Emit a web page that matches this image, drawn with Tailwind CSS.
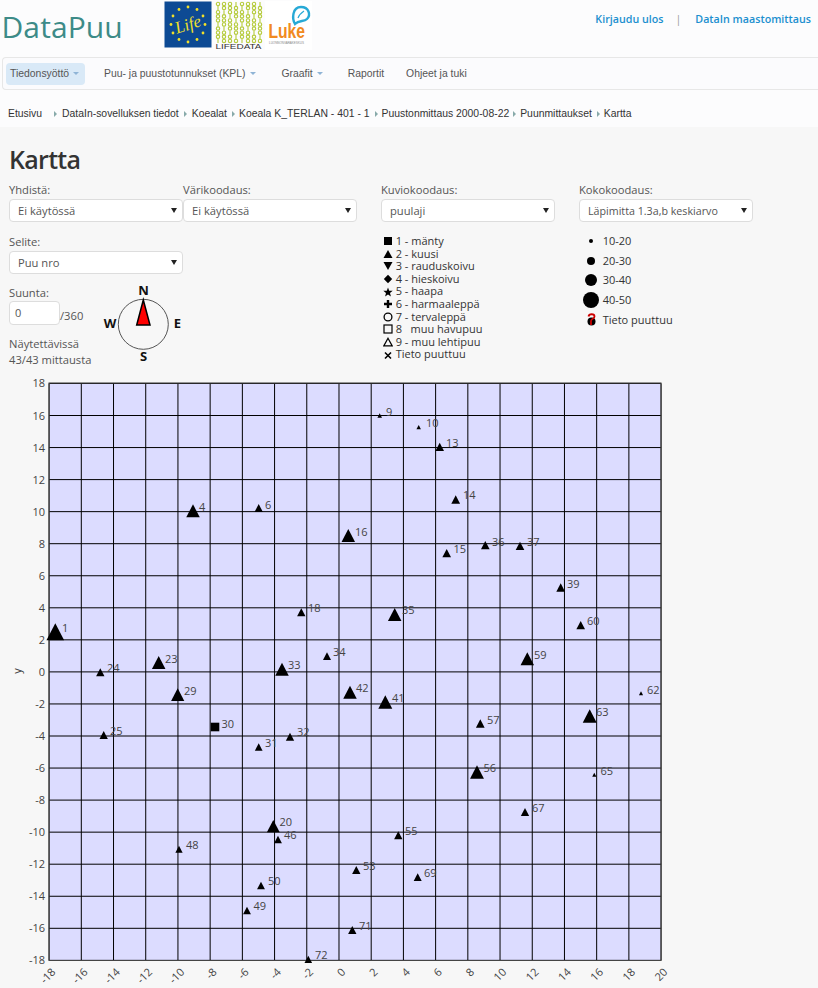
<!DOCTYPE html>
<html lang="fi">
<head>
  <meta charset="UTF-8" />
  <title>DataPuu - Kartta</title>
  <script src="https://cdn.jsdelivr.net/npm/@tailwindcss/browser@4"></script>
</head>
<body class="bg-[#f7f7f7] font-['Open_Sans',sans-serif] text-[#333] overflow-hidden">

<div class="w-[818px] h-[988px] overflow-hidden">
  <!-- Yläpalkki -->
  <div class="bg-[#fcfcfd]">
    <header class="h-[57px] flex items-start">
      <div class="w-[164px] pl-[1.5px] pt-[6px] text-[30px] leading-[42px] font-medium tracking-[0.1px] text-[#3d8b88]">DataPuu</div>
      <div class="flex items-start pt-[1px]">
        <svg width="48" height="47" viewBox="0 0 48 47" class="shrink-0">
          <rect x="0.5" y="0.5" width="47" height="46" fill="#0d4a94"/>
          <g fill="#f2e02a">
            <circle cx="24" cy="6" r="1.4"/><circle cx="33" cy="8.5" r="1.4"/><circle cx="39" cy="15" r="1.4"/><circle cx="41" cy="23.5" r="1.4"/><circle cx="39" cy="32" r="1.4"/><circle cx="33" cy="38.5" r="1.4"/><circle cx="24" cy="41" r="1.4"/><circle cx="15" cy="38.5" r="1.4"/><circle cx="9" cy="32" r="1.4"/><circle cx="7" cy="23.5" r="1.4"/><circle cx="9" cy="15" r="1.4"/><circle cx="15" cy="8.5" r="1.4"/>
          </g>
          <text x="24" y="29" text-anchor="middle" font-family="Liberation Serif" font-style="italic" font-size="17" fill="#f2e02a" transform="rotate(-18 24 24)">Life</text>
        </svg>
        <svg width="49" height="49" viewBox="0 0 49 49" class="ml-[3px] shrink-0">
          <g id="bars" fill="none" stroke="#b5cb3a" stroke-width="1.1"></g>
          <text x="0.5" y="48" font-family="Liberation Sans" font-size="7.5" textLength="46" lengthAdjust="spacingAndGlyphs" fill="#333">LIFEDATA</text>
        </svg>
        <svg width="47" height="49" viewBox="0 0 47 49" class="ml-[1px] shrink-0 overflow-visible">
          <rect width="47" height="49" fill="#fff"/>
          <path d="M30 23 C27 18 27 6 36 6 C44 6 46 14 42 18 C39 21 34 19 30 23 Z" fill="none" stroke="#27a9d6" stroke-width="2.4"/>
          <path d="M33 17 C34 14 36 12 39 10" stroke="#27a9d6" stroke-width="1.2" fill="none"/>
          <text x="3.5" y="37" font-family="Liberation Sans" font-weight="700" font-size="20" textLength="36.5" lengthAdjust="spacingAndGlyphs" fill="#f18a21">Luke</text>
          <text x="4" y="43" font-family="Liberation Sans" font-size="3" textLength="35" lengthAdjust="spacingAndGlyphs" fill="#888">LUONNONVARAKESKUS</text>
        </svg>
      </div>
      <div class="ml-auto pt-[12px] pr-[7px] flex text-[10.7px] leading-[15px] font-semibold text-[#1b8fcf]">
        <a href="#">Kirjaudu ulos</a>
        <span class="ml-[12px] mr-[14px] font-normal text-[#999]">|</span>
        <a href="#">DataIn maastomittaus</a>
      </div>
    </header>

    <!-- Navigaatio -->
    <nav class="h-[33px] ml-[2px] border border-r-0 border-[#e7e7e7] rounded-l-[4px] flex items-center font-['Liberation_Sans',sans-serif] text-[10.4px] text-[#555] bg-[#fbfbfd]">
      <a href="#" class="ml-[3px] w-[79px] h-[22px] rounded-[4px] bg-[#d9e9f7] flex items-center pl-[4px] gap-[4px]">Tiedonsyöttö <i class="w-0 h-0 border-x-[3px] border-x-transparent border-t-[3px] border-t-[#8fb4d6]"></i></a>
      <a href="#" class="ml-[19px] flex items-center gap-[4px]">Puu- ja puustotunnukset (KPL) <i class="w-0 h-0 border-x-[3px] border-x-transparent border-t-[3px] border-t-[#8fb4d6]"></i></a>
      <a href="#" class="ml-[26px] flex items-center gap-[4px]">Graafit <i class="w-0 h-0 border-x-[3px] border-x-transparent border-t-[3px] border-t-[#8fb4d6]"></i></a>
      <a href="#" class="ml-[25px]">Raportit</a>
      <a href="#" class="ml-[22px]">Ohjeet ja tuki</a>
    </nav>

    <!-- Murupolku -->
    <div class="h-[37px] pt-[10px] pl-[8px] flex items-center font-['Liberation_Sans',sans-serif] text-[10.4px] text-[#333]">
      <span class="mr-[12px]">Etusivu</span>
      <i class="w-0 h-0 border-y-[3px] border-y-transparent border-l-[3px] border-l-[#8aa]"></i><span class="ml-[5px] mr-[5px]">DataIn-sovelluksen tiedot</span>
      <i class="w-0 h-0 border-y-[3px] border-y-transparent border-l-[3px] border-l-[#8aa]"></i><span class="ml-[5px] mr-[5px]">Koealat</span>
      <i class="w-0 h-0 border-y-[3px] border-y-transparent border-l-[3px] border-l-[#8aa]"></i><span class="ml-[4px] mr-[5px]">Koeala K_TERLAN - 401 - 1</span>
      <i class="w-0 h-0 border-y-[3px] border-y-transparent border-l-[3px] border-l-[#8aa]"></i><span class="ml-[4px] mr-[4px]">Puustonmittaus 2000-08-22</span>
      <i class="w-0 h-0 border-y-[3px] border-y-transparent border-l-[3px] border-l-[#8aa]"></i><span class="ml-[4px] mr-[5px]">Puunmittaukset</span>
      <i class="w-0 h-0 border-y-[3px] border-y-transparent border-l-[3px] border-l-[#8aa]"></i><span class="ml-[4px]">Kartta</span>
    </div>
  </div>

  <!-- Sisältö -->
  <main class="pl-[9px]">
    <h1 class="text-[25px] leading-[36px] font-semibold tracking-[-0.7px] text-[#333] pt-[14px]">Kartta</h1>

    <div class="flex text-[11.2px] leading-[16px] text-[#555] mt-[5px]">
      <!-- Vasen: valinnat ja kompassi -->
      <div class="w-[372px] shrink-0">
        <div class="flex">
          <div class="w-[174px]">
            <label class="block">Yhdistä:</label>
            <div class="mt-[1px] w-[174px] h-[23px] border border-[#ddd] rounded-[4px] bg-white flex items-center justify-between pl-[8px] pr-[5px]"><span>Ei käytössä</span><i class="w-0 h-0 border-x-[3px] border-x-transparent border-t-[5px] border-t-[#222]"></i></div>
          </div>
          <div class="w-[174px]">
            <label class="block">Värikoodaus:</label>
            <div class="mt-[1px] w-[174px] h-[23px] border border-[#ddd] rounded-[4px] bg-white flex items-center justify-between pl-[8px] pr-[5px]"><span>Ei käytössä</span><i class="w-0 h-0 border-x-[3px] border-x-transparent border-t-[5px] border-t-[#222]"></i></div>
          </div>
        </div>
        <label class="block mt-[12px]">Selite:</label>
        <div class="mt-[1px] w-[174px] h-[23px] border border-[#ddd] rounded-[4px] bg-white flex items-center justify-between pl-[8px] pr-[5px]"><span>Puu nro</span><i class="w-0 h-0 border-x-[3px] border-x-transparent border-t-[5px] border-t-[#222]"></i></div>

        <div class="flex mt-[11px]">
          <div class="w-[100px]">
            <label class="block">Suunta:</label>
            <div class="flex items-center">
              <div class="w-[51px] h-[24px] border border-[#ddd] rounded-[4px] bg-white pl-[5px] flex items-center text-[11px]">0</div>
              <span class="mt-[6px]">/360</span>
            </div>
            <p class="mt-[11px]">Näytettävissä</p>
            <p>43/43 mittausta</p>
          </div>
          <svg width="66" height="82" viewBox="0 0 66 82" class="-mt-[3px] overflow-visible" font-family="Open Sans" font-size="13" font-weight="700" fill="#111">
            <circle cx="34.3" cy="42.3" r="25" fill="none" stroke="#555" stroke-width="1"/>
            <path d="M34.3 18 L27.7 43 L41 43 Z" fill="#f00" stroke="#000" stroke-width="1.5"/>
            <text x="34.5" y="12.5" text-anchor="middle">N</text>
            <text x="34.5" y="78.5" text-anchor="middle">S</text>
            <text x="1" y="46" text-anchor="middle">W</text>
            <text x="68.5" y="46" text-anchor="middle">E</text>
          </svg>
        </div>
      </div>

      <!-- Kuviokoodaus -->
      <div class="w-[198px] shrink-0">
        <label class="block">Kuviokoodaus:</label>
        <div class="mt-[1px] w-[174px] h-[23px] border border-[#ddd] rounded-[4px] bg-white flex items-center justify-between pl-[8px] pr-[5px]"><span>puulaji</span><i class="w-0 h-0 border-x-[3px] border-x-transparent border-t-[5px] border-t-[#222]"></i></div>
        <ul class="mt-[13px] text-[#333] leading-[12.6px] text-[11px]">
          <li class="flex items-center h-[12.6px]"><svg class="w-[10px] h-[10px] ml-[1.5px] mr-[3.2px]" viewBox="0 0 10 10"><rect x="1" y="1" width="8" height="8"/></svg>1 - mänty</li>
          <li class="flex items-center h-[12.6px]"><svg class="w-[10px] h-[10px] ml-[1.5px] mr-[3.2px]" viewBox="0 0 10 10"><path d="M5 1 L9.5 9 L.5 9 Z"/></svg>2 - kuusi</li>
          <li class="flex items-center h-[12.6px]"><svg class="w-[10px] h-[10px] ml-[1.5px] mr-[3.2px]" viewBox="0 0 10 10"><path d="M5 9 L9.5 1 L.5 1 Z"/></svg>3 - rauduskoivu</li>
          <li class="flex items-center h-[12.6px]"><svg class="w-[10px] h-[10px] ml-[1.5px] mr-[3.2px]" viewBox="0 0 10 10"><path d="M5 .8 L9.2 5 L5 9.2 L.8 5 Z"/></svg>4 - hieskoivu</li>
          <li class="flex items-center h-[12.6px]"><svg class="w-[10px] h-[10px] ml-[1.5px] mr-[3.2px]" viewBox="0 0 10 10"><path d="M5 .5 L6.2 3.7 L9.7 3.8 L7 6 L7.9 9.4 L5 7.5 L2.1 9.4 L3 6 L.3 3.8 L3.8 3.7 Z"/></svg>5 - haapa</li>
          <li class="flex items-center h-[12.6px]"><svg class="w-[10px] h-[10px] ml-[1.5px] mr-[3.2px]" viewBox="0 0 10 10"><path d="M3.8 1 H6.2 V3.8 H9 V6.2 H6.2 V9 H3.8 V6.2 H1 V3.8 H3.8 Z"/></svg>6 - harmaaleppä</li>
          <li class="flex items-center h-[12.6px]"><svg class="w-[10px] h-[10px] ml-[1.5px] mr-[3.2px]" viewBox="0 0 10 10"><circle cx="5" cy="5" r="3.9" fill="none" stroke="#000" stroke-width="1.3"/></svg>7 - tervaleppä</li>
          <li class="flex items-center h-[12.6px]"><svg class="w-[10px] h-[10px] ml-[1.5px] mr-[3.2px]" viewBox="0 0 10 10"><rect x="1" y="1" width="8" height="8" fill="none" stroke="#000" stroke-width="1.2"/></svg>8 &nbsp; muu havupuu</li>
          <li class="flex items-center h-[12.6px]"><svg class="w-[10px] h-[10px] ml-[1.5px] mr-[3.2px]" viewBox="0 0 10 10"><path d="M5 1.3 L9.2 8.9 L.8 8.9 Z" fill="none" stroke="#000" stroke-width="1.2"/></svg>9 - muu lehtipuu</li>
          <li class="flex items-center h-[12.6px]"><svg class="w-[10px] h-[10px] ml-[1.5px] mr-[3.2px]" viewBox="0 0 10 10"><path d="M2 2.5 L8 8.5 M8 2.5 L2 8.5" stroke="#000" stroke-width="1.6"/></svg>Tieto puuttuu</li>
        </ul>
      </div>

      <!-- Kokokoodaus -->
      <div class="w-[180px] shrink-0">
        <label class="block">Kokokoodaus:</label>
        <div class="mt-[1px] w-[174px] h-[23px] border border-[#ddd] rounded-[4px] bg-white flex items-center justify-between pl-[8px] pr-[5px] text-[10.7px]"><span>Läpimitta 1.3a,b keskiarvo</span><i class="w-0 h-0 border-x-[3px] border-x-transparent border-t-[5px] border-t-[#222]"></i></div>
        <ul class="mt-[9px] ml-[4px] text-[#333] text-[11px]">
          <li class="flex items-center h-[19.7px]"><span class="w-[16px] flex justify-center mr-[3.7px]"><i class="block w-[4px] h-[4px] rounded-full bg-black"></i></span>10-20</li>
          <li class="flex items-center h-[19.7px]"><span class="w-[16px] flex justify-center mr-[3.7px]"><i class="block w-[8px] h-[8px] rounded-full bg-black"></i></span>20-30</li>
          <li class="flex items-center h-[19.7px]"><span class="w-[16px] flex justify-center mr-[3.7px]"><i class="block w-[12px] h-[12px] rounded-full bg-black"></i></span>30-40</li>
          <li class="flex items-center h-[19.7px]"><span class="w-[16px] flex justify-center mr-[3.7px]"><i class="block w-[16px] h-[16px] rounded-full bg-black"></i></span>40-50</li>
          <li class="flex items-center h-[19.7px]"><span class="w-[16px] flex justify-center mr-[3.7px]"><svg width="9" height="13" viewBox="0 0 9 13"><circle cx="4.5" cy="8.5" r="4"/><path d="M1.5 3.5 C2 .5 7.5 .5 7.5 3.5 C7.5 6 4 5.5 4 8 V12" fill="none" stroke="#c00" stroke-width="1.8"/></svg></span>Tieto puuttuu</li>
        </ul>
      </div>
    </div>
  </main>

  <!-- Kartta: vapaa piirtoalue -->
  <svg id="chart" width="818" height="988" viewBox="0 0 818 988" class="absolute left-0 top-0 pointer-events-none" font-family="Open Sans" font-size="11">
    <rect x="49" y="383" width="612" height="577.5" fill="#dcdcff"/>
  </svg>
</div>

<script>
  const NS = 'http://www.w3.org/2000/svg';
  const chart = document.getElementById('chart');

  function add(parent, tag, attrs, text) {
    const el = document.createElementNS(NS, tag);
    for (const k in attrs) el.setAttribute(k, attrs[k]);
    if (text !== undefined) el.textContent = text;
    parent.appendChild(el);
    return el;
  }

  // LIFEDATA-logon palkit
  const bars = document.getElementById('bars');
  for (let c = 0; c < 8; c++) {
    for (let r = 0; r < 10; r++) {
      if ((c * 3 + r) % 4 === 1) add(bars, 'line', { x1: 3 + c * 6, x2: 3 + c * 6, y1: 1 + r * 4.1, y2: 5.1 + r * 4.1 });
      else add(bars, 'circle', { cx: 3 + c * 6, cy: 3 + r * 4.1, r: 1.7 });
    }
  }

  // Ruudukko
  const X0 = 49.1, DX = 32.21, Y0 = 383.45, DY = 32.05;
  for (let i = 0; i <= 19; i++) {
    const x = X0 + DX * i;
    add(chart, 'line', { x1: x, x2: x, y1: Y0, y2: Y0 + DY * 18, stroke: '#000', 'stroke-width': 1 });
    const lx = x + 7.2, ly = 972.8;
    add(chart, 'text', { x: lx, y: ly, 'text-anchor': 'end', fill: '#444', transform: `rotate(-45 ${lx} ${ly})` }, String(i * 2 - 18));
  }
  for (let j = 0; j <= 18; j++) {
    const y = Y0 + DY * j;
    add(chart, 'line', { x1: X0, x2: X0 + DX * 19, y1: y, y2: y, stroke: '#000', 'stroke-width': 1 });
    add(chart, 'text', { x: 45, y: y + 4, 'text-anchor': 'end', fill: '#444' }, String(18 - j * 2));
  }
  add(chart, 'rect', { x: 49, y: 383, width: 612, height: 577.5, fill: 'none', stroke: '#444', 'stroke-width': 1 });
  add(chart, 'text', { x: 20.5, y: 671, 'text-anchor': 'middle', fill: '#444', transform: 'rotate(-90 20.5 671)' }, 'y');

  // [x, yläreuna, alareuna, nro, nimiön x, nimiön keskikohta y]
  const trees = [
    [55.3,623.3,640.3,1,62,628],[193,504.3,517.3,4,199,507],[258.7,504,512,6,265,505],
    [301.3,608.3,616.3,18,308,608],[158.7,656,669,23,165,659],[100.3,668.3,676.3,24,107,668],
    [282,662.7,675.7,33,288,665],[327,652.3,660,34,333,652],[379.7,413.3,417.7,9,386,412],
    [418.7,425,429.3,10,426,423],[439.7,442.7,451,13,446,443],[455.7,495.3,503.7,14,463,495],
    [348.3,529,542,16,355,532],[446.7,549,557.3,15,453.5,549],[485.3,541,549.3,36,492,542],
    [520,541.7,550,37,527,542],[560.7,583.3,591.7,39,567,584],[580.7,621,629.3,60,587,621],
    [394.7,608,621,35,402,610],[527.3,652.3,665.3,59,534,655],[177.7,688.3,701,29,184,691],
    [103.7,731,739,25,110,731],[258.7,743.3,750.7,31,265,743],[290,732.7,740.7,32,297,732],
    [273.3,820,832.3,20,279.5,822],[278,835.7,843.3,46,284,835],[179,845.7,852.7,48,186,845],
    [261,881.7,889.3,50,268,881],[247,906.7,914.3,49,253.5,906],[308.3,955.7,963,72,315,955],
    [350,685.7,698.7,42,356,688],[385.3,695.3,708.7,41,392,698],[480.3,719.3,727.7,57,487,720],
    [589.7,709.3,722.7,63,596,712],[641,691.3,695.3,62,647,690],[477,765.3,778.7,56,483.5,768],
    [594.3,772.7,776.7,65,600.5,771],[525,808,816,67,532,808],[398.3,831.3,839.3,55,405,831],
    [356.3,866,874,53,363,866],[417.7,873.3,881,69,424,873],[352.3,926,934,71,359,926]
  ];
  trees.forEach(([x, top, bottom, nro, lx, ly]) => {
    const half = (bottom - top) * 0.52;
    add(chart, 'path', { d: `M${x} ${top} L${x + half} ${bottom} L${x - half} ${bottom} Z`, fill: '#000' });
    add(chart, 'text', { x: lx, y: ly + 4, fill: '#444' }, String(nro));
  });
  // Puu 30 on mänty
  add(chart, 'rect', { x: 210.7, y: 722.7, width: 8.6, height: 8.6, fill: '#000' });
  add(chart, 'text', { x: 221.5, y: 728, fill: '#444' }, '30');
</script>

</body>
</html>
